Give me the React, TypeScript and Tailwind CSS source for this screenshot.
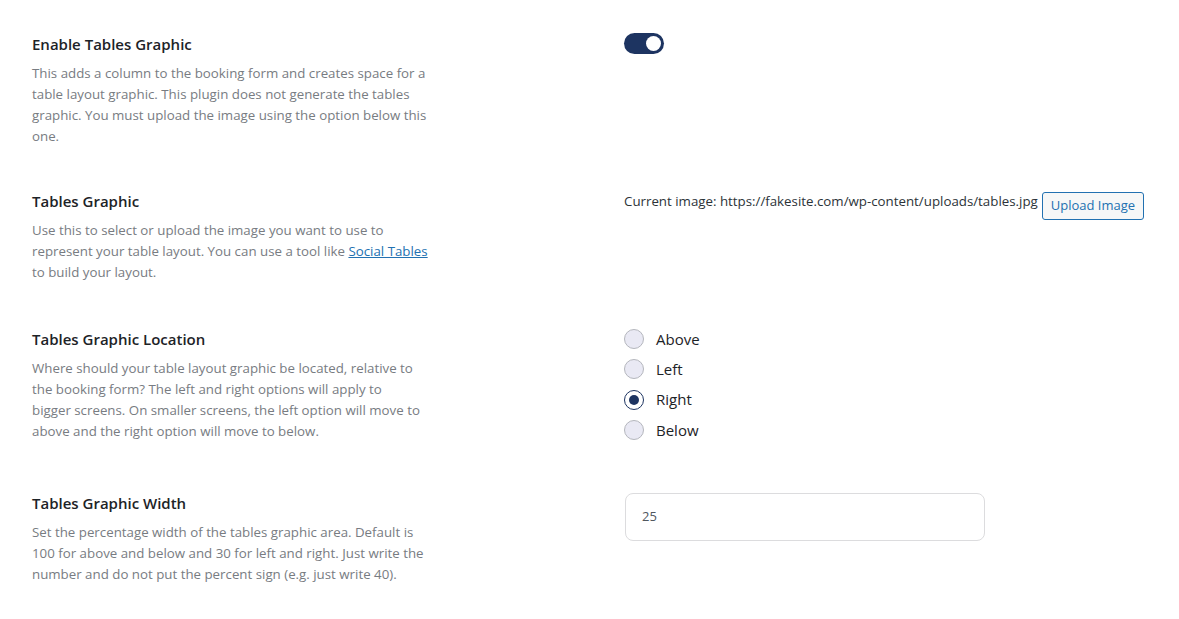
import React from "react";

const font = { fontFamily: '"Open Sans", "Noto Sans", sans-serif' };

function Row({ title, desc, right, extra = "" }: { title: string; desc: React.ReactNode; right: React.ReactNode; extra?: string }) {
  return (
    <div className={`flex ${extra}`}>
      <div className="w-[592px] shrink-0">
        <div className="text-[15px] leading-[22px] font-semibold text-[#1d2327]">{title}</div>
        <div className="mt-2 w-[398px] text-[13.3px] leading-[21px] text-[#787c82]">{desc}</div>
      </div>
      <div className="flex-1">{right}</div>
    </div>
  );
}

function Radio({ label, checked }: { label: string; checked?: boolean }) {
  return (
    <label className="flex items-center h-[30.3px] gap-3">
      <span
        className={`w-5 h-5 rounded-full border flex items-center justify-center bg-[#e9e9f4] ${
          checked ? "border-[#1d3461] border-[1.5px] bg-white" : "border-[#b4b6bd]"
        }`}
      >
        {checked && <span className="w-[10px] h-[10px] rounded-full bg-[#1d3461]" />}
      </span>
      <span className="text-[15px] text-[#1d2327]">{label}</span>
    </label>
  );
}

export default function App() {
  return (
    <div className="bg-white w-[1179px] h-[619px] pl-8 pt-[33px]" style={font}>
      <Row
        title="Enable Tables Graphic"
        desc="This adds a column to the booking form and creates space for a table layout graphic. This plugin does not generate the tables graphic. You must upload the image using the option below this one."
        right={
          <div className="w-10 h-[21px] rounded-full bg-[#1d3461] flex items-center justify-end pr-[3px]">
            <span className="w-[15px] h-[15px] rounded-full bg-white" />
          </div>
        }
      />
      <Row
        extra="mt-[43px]"
        title="Tables Graphic"
        desc={
          <>
            Use this to select or upload the image you want to use to represent your table layout. You can use a tool like{" "}
            <a href="#" className="text-[#2271b1] underline">Social Tables</a> to build your layout.
          </>
        }
        right={
          <div className="flex items-start pt-[2px]">
            <span className="text-[13.3px] leading-[18px] text-[#2c3338]">
              Current image: https://fakesite.com/wp-content/uploads/tables.jpg
            </span>
            <button className="ml-[4px] h-[28px] px-[8px] rounded-[3px] border border-[#2271b1] bg-[#f6f7f7] text-[13px] text-[#2271b1]">
              Upload Image
            </button>
          </div>
        }
      />
      <Row
        extra="mt-[45px]"
        title="Tables Graphic Location"
        desc={
          <>
            Where should your table layout graphic be located, relative to the booking form? The left and right options will apply to
            <br />
            bigger screens. On smaller screens, the left option will move to above and the right option will move to below.
          </>
        }
        right={
          <div className="-mt-[4px] pb-[3px]">
            <Radio label="Above" />
            <Radio label="Left" />
            <Radio label="Right" checked />
            <Radio label="Below" />
          </div>
        }
      />
      <Row
        extra="mt-[44px]"
        title="Tables Graphic Width"
        desc="Set the percentage width of the tables graphic area. Default is 100 for above and below and 30 for left and right. Just write the number and do not put the percent sign (e.g. just write 40)."
        right={
          <div className="pl-px pt-px">
            <div className="w-[360px] h-[48px] rounded-[8px] border border-[#dcdcde] flex items-center pl-4 text-[13px] text-[#50575e]">
              25
            </div>
          </div>
        }
      />
    </div>
  );
}
